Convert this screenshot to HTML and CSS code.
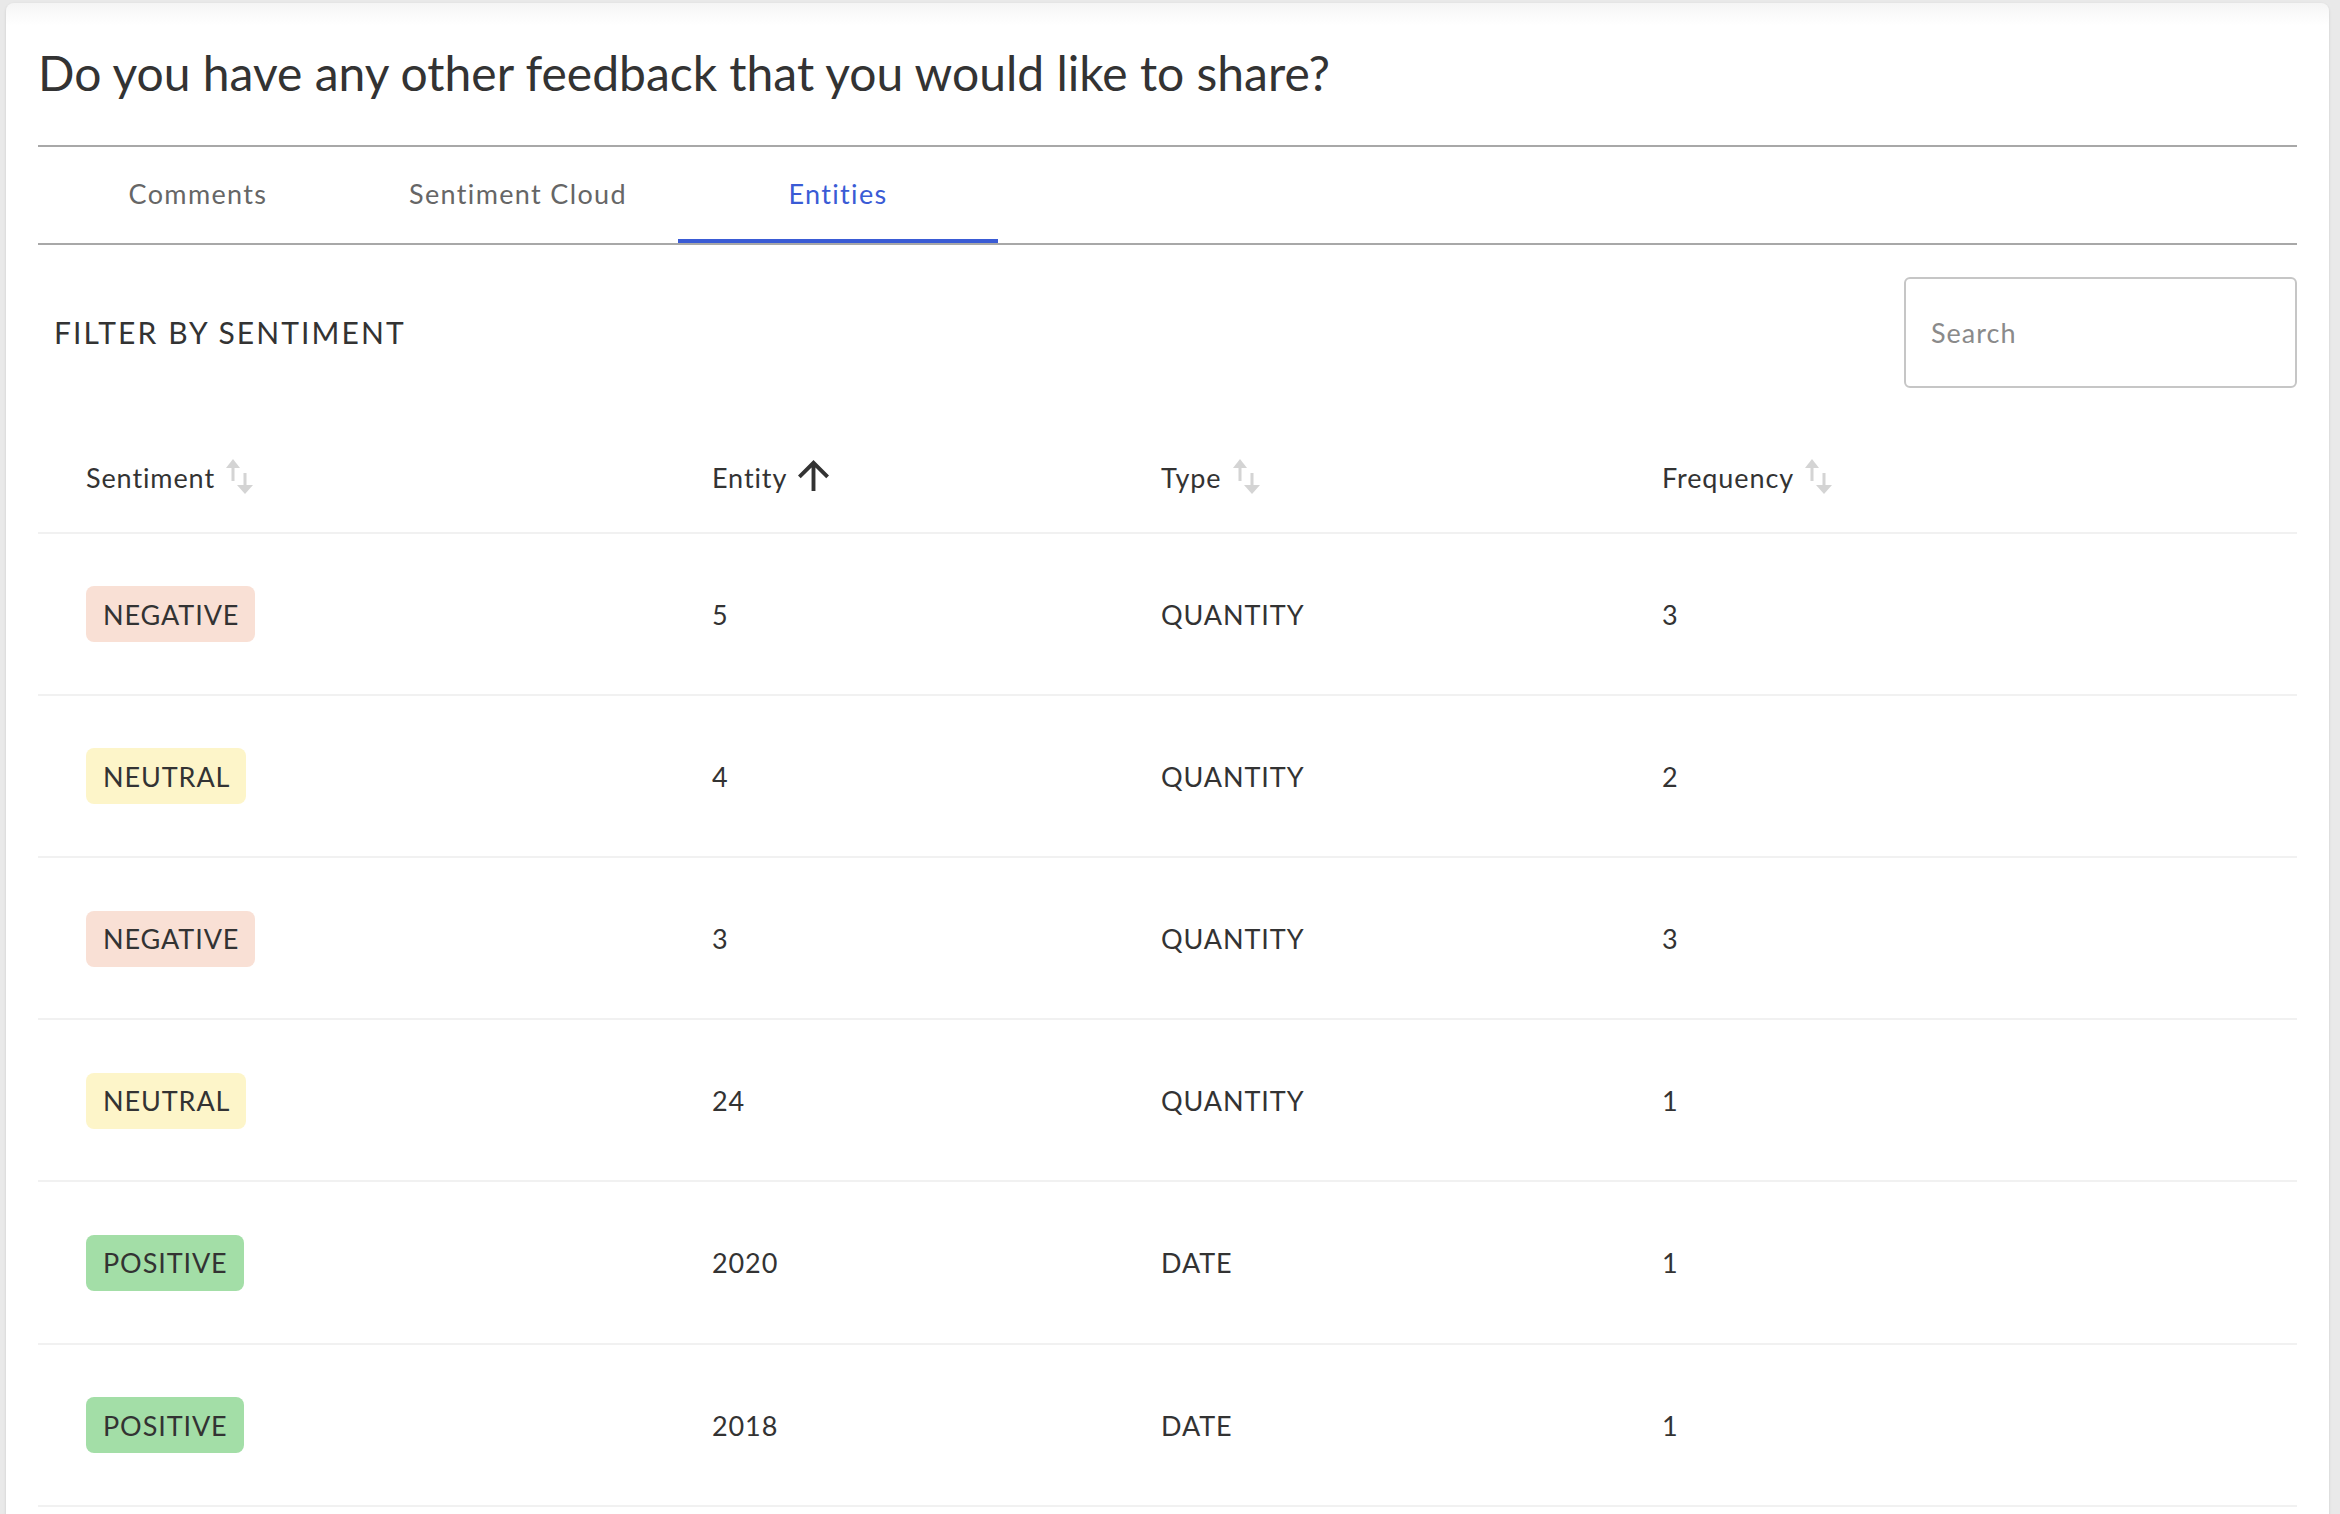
FILE: index.html
```html
<!DOCTYPE html>
<html lang="en">
<head>
<meta charset="utf-8">
<title>Entities</title>
<link rel="stylesheet" href="styles.css">
</head>
<body>
<div class="card">
  <h1 class="title">Do you have any other feedback that you would like to share?</h1>
  <div class="tabs">
    <div class="tab">Comments</div>
    <div class="tab">Sentiment Cloud</div>
    <div class="tab active">Entities</div>
  </div>
  <div class="filter-row">
    <div class="filter-label">FILTER BY SENTIMENT</div>
    <div class="search"><span class="placeholder">Search</span></div>
  </div>
  <div class="table">
    <div class="row head">
      <div class="cell">Sentiment <svg class="sort" viewBox="0 0 28 36" width="28" height="36"><polygon points="0,9 7,0 14,9" /><rect x="5.5" y="8" width="3" height="14"/><rect x="17.5" y="14" width="3" height="13"/><polygon points="11,26 19,35 27,26"/></svg></div>
      <div class="cell">Entity <svg class="sorted" viewBox="4 4 16 16" width="31" height="31"><path d="M4 12l1.41 1.41L11 7.83V20h2V7.83l5.58 5.59L20 12l-8-8-8 8z"/></svg></div>
      <div class="cell">Type <svg class="sort" viewBox="0 0 28 36" width="28" height="36"><polygon points="0,9 7,0 14,9" /><rect x="5.5" y="8" width="3" height="14"/><rect x="17.5" y="14" width="3" height="13"/><polygon points="11,26 19,35 27,26"/></svg></div>
      <div class="cell">Frequency <svg class="sort" viewBox="0 0 28 36" width="28" height="36"><polygon points="0,9 7,0 14,9" /><rect x="5.5" y="8" width="3" height="14"/><rect x="17.5" y="14" width="3" height="13"/><polygon points="11,26 19,35 27,26"/></svg></div>
    </div>
    <div class="row">
      <div class="cell"><span class="badge negative">NEGATIVE</span></div>
      <div class="cell">5</div>
      <div class="cell">QUANTITY</div>
      <div class="cell">3</div>
    </div>
    <div class="row">
      <div class="cell"><span class="badge neutral">NEUTRAL</span></div>
      <div class="cell">4</div>
      <div class="cell">QUANTITY</div>
      <div class="cell">2</div>
    </div>
    <div class="row">
      <div class="cell"><span class="badge negative">NEGATIVE</span></div>
      <div class="cell">3</div>
      <div class="cell">QUANTITY</div>
      <div class="cell">3</div>
    </div>
    <div class="row">
      <div class="cell"><span class="badge neutral">NEUTRAL</span></div>
      <div class="cell">24</div>
      <div class="cell">QUANTITY</div>
      <div class="cell">1</div>
    </div>
    <div class="row">
      <div class="cell"><span class="badge positive">POSITIVE</span></div>
      <div class="cell">2020</div>
      <div class="cell">DATE</div>
      <div class="cell">1</div>
    </div>
    <div class="row">
      <div class="cell"><span class="badge positive">POSITIVE</span></div>
      <div class="cell">2018</div>
      <div class="cell">DATE</div>
      <div class="cell">1</div>
    </div>
  </div>
</div>
</body>
</html>
```
FILE: styles.css
```css
html, body {
  margin: 0;
  padding: 0;
  background: #e9e9e9;
  font-family: Lato, "Open Sans", "Liberation Sans", sans-serif;
  color: #333333;
  overflow: hidden;
}

.card {
  margin: 3px 0 0 6px;
  width: 2323px;
  box-sizing: border-box;
  padding: 41px 32px 40px 32px;
  background: linear-gradient(#f5f5f5 0px, #ffffff 22px);
  border-radius: 8px;
  box-shadow: 0 1px 3px rgba(0, 0, 0, 0.12);
  min-height: 1600px;
}

.title {
  margin: 0 0 43px 0;
  font-size: 48px;
  line-height: 57.6px;
  font-weight: 400;
  color: #333333;
}

.tabs {
  display: flex;
  border-top: 2px solid #a8a8a8;
  border-bottom: 2px solid #a8a8a8;
  height: 96px;
}

.tab {
  width: 320px;
  box-sizing: border-box;
  display: flex;
  align-items: center;
  justify-content: center;
  font-size: 27px;
  letter-spacing: 1.35px;
  color: #666666;
  border-bottom: 4px solid transparent;
  padding-top: 1px;
}

.tab.active {
  color: #3a5bd5;
  border-bottom-color: #3a5bd5;
}

.filter-row {
  margin-top: 32px;
  display: flex;
  justify-content: space-between;
  align-items: center;
}

.filter-label {
  padding-left: 16px;
  font-size: 30px;
  color: #333333;
  letter-spacing: 2.1px;
}

.search {
  width: 393px;
  height: 111px;
  box-sizing: border-box;
  border: 2px solid #c6c6c6;
  border-radius: 6px;
  display: flex;
  align-items: center;
  padding-left: 25px;
}

.placeholder {
  font-size: 27px;
  letter-spacing: 1px;
  color: #8a8a8a;
}

.table {
  margin-top: 37px;
}

.row {
  display: grid;
  grid-template-columns: 626px 449px 501px 1fr;
  padding-left: 48px;
  height: 160.2px;
  border-bottom: 2px solid #f1f1f1;
  align-items: center;
}

.row.head {
  height: 107px;
}

.head .cell {
  margin-top: -2px;
}

.cell {
  font-size: 27px;
  letter-spacing: 0.9px;
  color: #333333;
  display: flex;
  align-items: center;
  margin-top: 1px;
}

.sort {
  margin-left: 11px;
  fill: #d4d4d4;
}

.sorted {
  margin-left: 11px;
  fill: #333333;
  margin-top: -3px;
}

.badge {
  display: inline-flex;
  align-items: center;
  height: 56px;
  padding: 0 16px 0 17px;
  border-radius: 8px;
  font-size: 27px;
  letter-spacing: 0.9px;
  color: #333333;
}

.badge.negative {
  background: #f9e0d5;
}

.badge.neutral {
  background: #fdf5c9;
}

.badge.positive {
  background: #a3dea7;
}
```
